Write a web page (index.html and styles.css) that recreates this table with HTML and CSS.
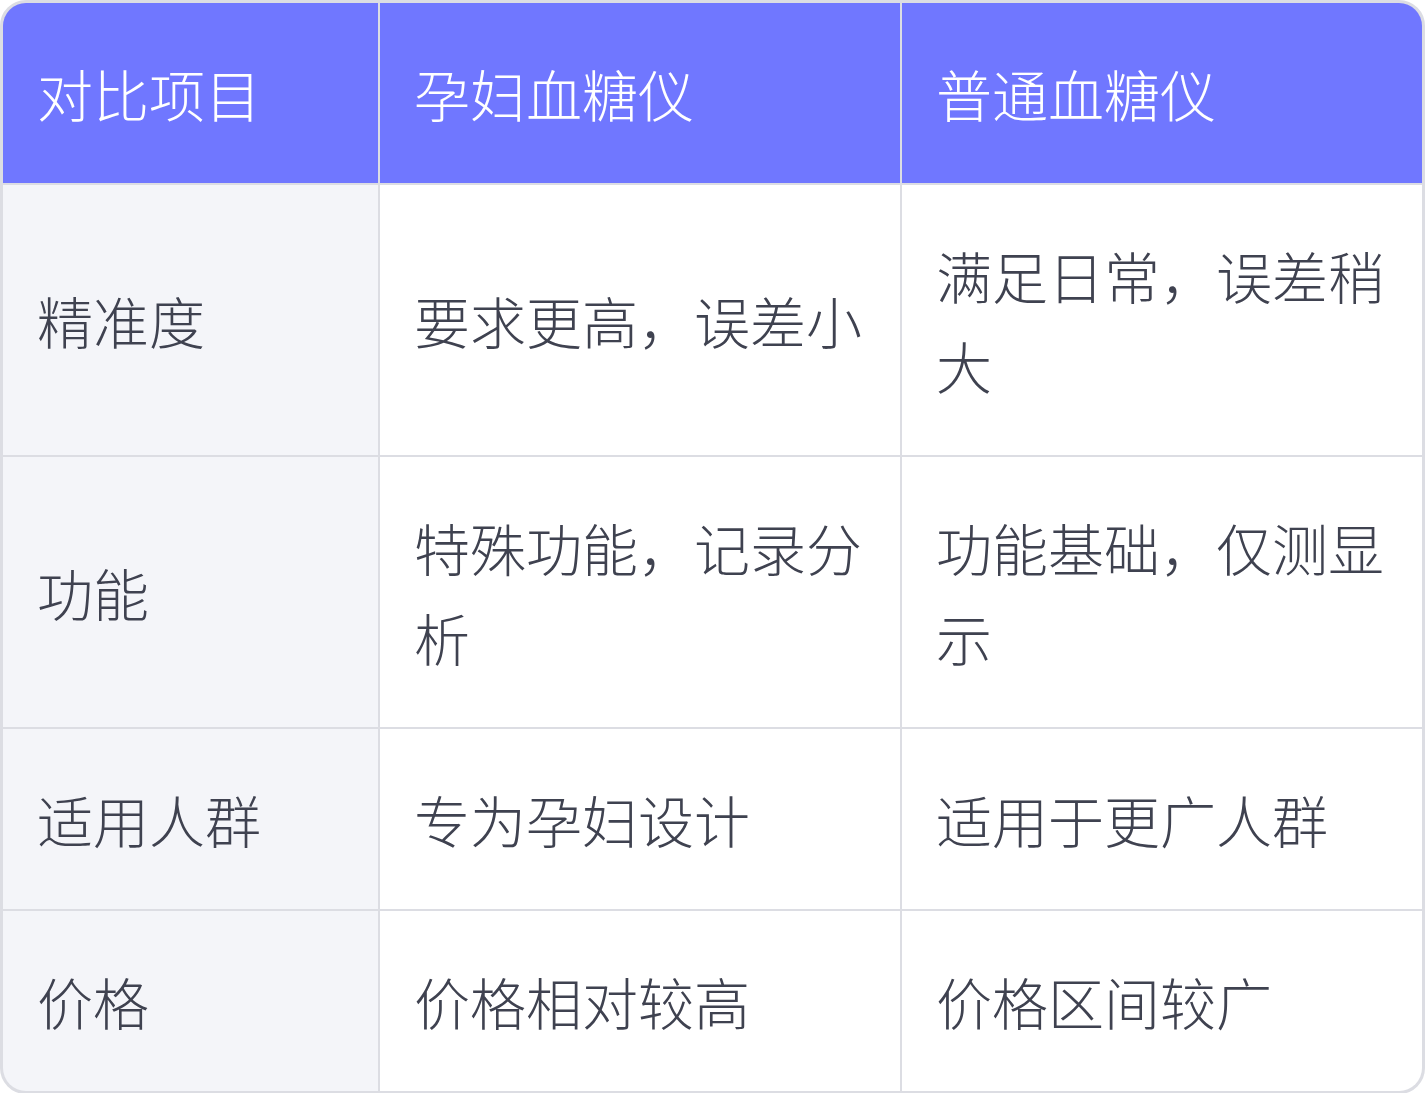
FILE: index.html
```html
<!DOCTYPE html>
<html lang="zh-CN">
<head>
<meta charset="utf-8">
<title>孕妇血糖仪对比</title>
<link rel="stylesheet" href="styles.css">
</head>
<body>
<div class="table">
  <div class="cell head">对比项目</div>
  <div class="cell head">孕妇血糖仪</div>
  <div class="cell head">普通血糖仪</div>

  <div class="cell label">精准度</div>
  <div class="cell">要求更高，误差小</div>
  <div class="cell">满足日常，误差稍大</div>

  <div class="cell label">功能</div>
  <div class="cell">特殊功能，记录分析</div>
  <div class="cell">功能基础，仅测显示</div>

  <div class="cell label">适用人群</div>
  <div class="cell">专为孕妇设计</div>
  <div class="cell">适用于更广人群</div>

  <div class="cell label">价格</div>
  <div class="cell">价格相对较高</div>
  <div class="cell">价格区间较广</div>
</div>
</body>
</html>
```
FILE: styles.css
```css
html, body {
  margin: 0;
  padding: 0;
  background: #ffffff;
}
.table {
  display: grid;
  grid-template-columns: 375px 520px 520px;
  gap: 2px;
  width: 1419px;
  background: #dcdde3;
  border: 3px solid #dcdde3;
  border-radius: 26px;
  overflow: hidden;
  font-family: "Noto Sans CJK SC", "Noto Sans", sans-serif;
  font-size: 56px;
  line-height: 90px;
  font-weight: 300;
  color: #3f4250;
}
.cell {
  display: flex;
  align-items: center;
  padding: 45px 34px;
  background: #ffffff;
}
.head {
  background: #7077ff;
  color: #ffffff;
}
.label {
  background: #f4f5f9;
}
```
